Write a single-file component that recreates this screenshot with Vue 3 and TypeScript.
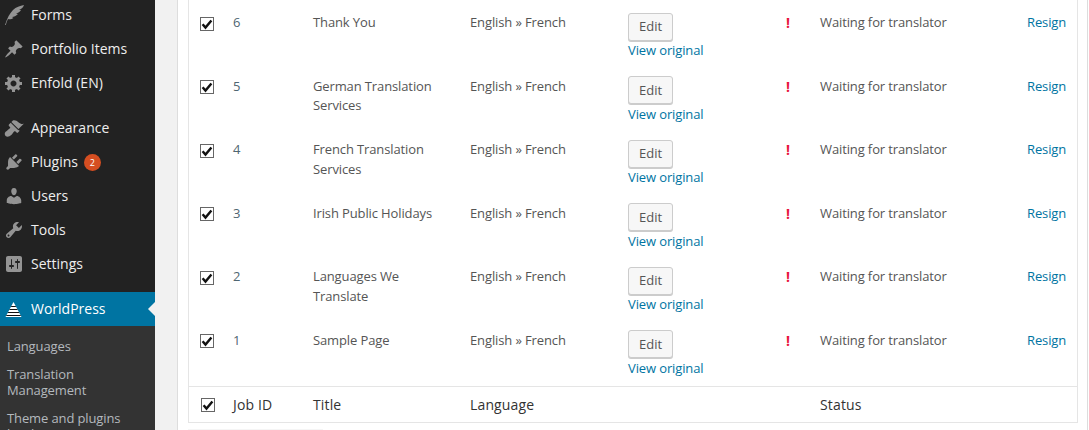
<script setup lang="ts">
interface MenuItem { label: string; icon: string; badge?: string; gapBefore?: boolean }
const icons: Record<string, string> = {
  forms: 'M1 20C3 13 6 8 9 5 12 2 16 1 20 0 19 3 17 4 15 5L17 5C16 7 14 8 12 8.5L14 9C12 11 10 12 8 12L9.5 13C7.5 14.5 5.5 14.5 4 14 3 16 2.2 18 1.8 20Z',
  pin: 'M10.44 3.02l1.82-1.82 6.36 6.35-1.83 1.82c-1.05-.68-2.48-.57-3.41.36l-.75.75c-.92.93-1.04 2.35-.35 3.41l-1.83 1.82-2.41-2.41-2.8 2.79c-.42.42-3.38 2.71-3.8 2.29s1.86-3.39 2.28-3.81l2.79-2.79L4.1 9.36l1.83-1.82c1.05.69 2.48.57 3.4-.36l.75-.75c.93-.92 1.05-2.35.36-3.41z',
  gear: 'M18 12h-2.18c-.17.7-.44 1.35-.81 1.93l1.54 1.54-2.1 2.1-1.54-1.54c-.58.36-1.23.63-1.91.79V19H8v-2.18c-.68-.16-1.33-.43-1.91-.79l-1.54 1.54-2.12-2.12 1.54-1.54c-.36-.58-.63-1.23-.79-1.91H1V9.03h2.17c.16-.7.44-1.35.8-1.94L2.43 5.55l2.1-2.1 1.54 1.54c.58-.37 1.24-.64 1.93-.81V2h3v2.18c.68.16 1.33.43 1.91.79l1.54-1.54 2.12 2.12-1.54 1.54c.36.59.64 1.24.8 1.94H18V12zm-8.5 1.5c1.66 0 3-1.34 3-3s-1.34-3-3-3-3 1.34-3 3 1.34 3 3 3z',
  brush: 'M14.48 11.06L7.41 3.99l1.5-1.5c.5-.56 2.3-.47 3.51.32 1.21.8 1.43 1.28 2.91 2.1 1.18.64 2.45 1.26 4.45.85zm-.71.71L6.7 4.7 4.93 6.47c-.39.39-.39 1.02 0 1.41l1.06 1.06c.39.39.39 1.03 0 1.42-.6.6-1.43 1.11-2.21 1.69-.35.26-.7.53-1.01.84C1.43 13.23.76 14.8.76 15.9c0 .76.3 1.47.83 2 .53.54 1.25.83 2 .83 1.08 0 2.67-.67 3.98-1.96.3-.32.57-.66.83-1.02.58-.78 1.09-1.61 1.7-2.21.38-.39 1.02-.39 1.41 0l1.06 1.06c.39.39 1.02.39 1.41 0l1.77-1.77z',
  plug: 'M13.11 4.36L9.87 7.6 8 5.73l3.24-3.24c.35-.34 1.05-.2 1.56.32.52.51.66 1.21.31 1.55zm-8 1.77l.91-1.12 9.01 9.01-1.19.84c-.71.71-2.63 1.16-3.82 1.16H6.14L4.9 17.26c-.59.59-1.54.59-2.12 0-.59-.58-.59-1.53 0-2.12l1.24-1.24v-3.88c0-1.13.4-3.19 1.09-3.89zm7.26 3.97l3.24-3.24c.34-.35 1.04-.21 1.55.31.52.51.66 1.21.31 1.55l-3.24 3.25z',
  user: 'M10 9.25c-2.27 0-2.73-3.44-2.73-3.44C7 4.02 7.82 2 9.97 2c2.16 0 2.98 2.02 2.71 3.81 0 0-.41 3.44-2.68 3.44zm0 2.57L12.72 10c2.39 0 4.52 2.33 4.52 4.53v2.49s-3.65 1.13-7.24 1.13c-3.65 0-7.24-1.13-7.24-1.13v-2.49c0-2.25 1.94-4.48 4.47-4.48z',
  tools: 'M16.68 9.77c-1.34 1.34-3.3 1.67-4.95.99l-5.41 6.52c-.99.99-2.59.99-3.58 0s-.99-2.59 0-3.57l6.52-5.42c-.68-1.65-.35-3.61.99-4.95 1.28-1.28 3.12-1.62 4.72-1.06l-2.89 2.89 2.82 2.82 2.86-2.87c.53 1.58.18 3.39-1.08 4.65zM3.81 16.21c.4.39 1.04.39 1.43 0 .4-.4.4-1.04 0-1.43-.39-.4-1.03-.4-1.43 0-.39.39-.39 1.03 0 1.43z',
  settings: 'M18 16V4c0-1.1-.9-2-2-2H4c-1.1 0-2 .9-2 2v12c0 1.1.9 2 2 2h12c1.1 0 2-.9 2-2zM8 11h1c.55 0 1 .45 1 1s-.45 1-1 1H8v1.5c0 .28-.22.5-.5.5s-.5-.22-.5-.5V13H6c-.55 0-1-.45-1-1s.45-1 1-1h1V5.5c0-.28.22-.5.5-.5s.5.22.5.5V11zm5-2h-1c-.55 0-1-.45-1-1s.45-1 1-1h1V5.5c0-.28.22-.5.5-.5s.5.22.5.5V7h1c.55 0 1 .45 1 1s-.45 1-1 1h-1v5.5c0 .28-.22.5-.5.5s-.5-.22-.5-.5V9z',
}
const menu: MenuItem[] = [
  { label: 'Forms', icon: 'forms' },
  { label: 'Portfolio Items', icon: 'pin' },
  { label: 'Enfold (EN)', icon: 'gear' },
  { label: 'Appearance', icon: 'brush', gapBefore: true },
  { label: 'Plugins', icon: 'plug', badge: '2' },
  { label: 'Users', icon: 'user' },
  { label: 'Tools', icon: 'tools' },
  { label: 'Settings', icon: 'settings' },
]
const submenu = ['Languages', 'Translation Management', 'Theme and plugins localization']
const jobs = [
  { id: 6, title: 'Thank You' },
  { id: 5, title: 'German Translation Services' },
  { id: 4, title: 'French Translation Services' },
  { id: 3, title: 'Irish Public Holidays' },
  { id: 2, title: 'Languages We Translate' },
  { id: 1, title: 'Sample Page' },
]
</script>

<template>
  <div class="app">
    <nav class="sidebar">
      <ul class="menu">
        <li v-for="item in menu" :key="item.label" class="item" :class="{ gap: item.gapBefore }">
          <span class="icon"><svg width="20" height="20" viewBox="0 0 20 20"><path :d="icons[item.icon]" fill="#949494" fill-rule="evenodd" /></svg></span>
          <span>{{ item.label }}</span>
          <span v-if="item.badge" class="badge">{{ item.badge }}</span>
        </li>
        <li class="item current">
          <span class="icon">
            <svg width="20" height="20" viewBox="0 0 20 20">
              <clipPath id="wp-tri"><polygon points="9.5,3 17.5,18 1.5,18" /></clipPath>
              <g clip-path="url(#wp-tri)">
                <rect x="0" y="0" width="20" height="20" fill="#fff" />
                <rect x="0" y="7" width="20" height="1" fill="#111" />
                <rect x="0" y="10" width="20" height="1" fill="#111" />
                <rect x="0" y="13" width="20" height="1" fill="#111" />
                <rect x="0" y="16" width="20" height="1" fill="#111" />
              </g>
            </svg>
          </span>
          <span>WorldPress</span>
          <span class="arrow"></span>
        </li>
      </ul>
      <ul class="sub">
        <li v-for="s in submenu" :key="s">{{ s }}</li>
      </ul>
    </nav>
    <main class="content">
      <div class="panel">
        <div class="jobs">
          <div v-for="job in jobs" :key="job.id" class="row">
            <span class="check"><svg width="12" height="12" viewBox="0 0 12 12"><path d="M1.6 6.2 4.5 9.6 10.4 2.6" fill="none" stroke="#111" stroke-width="2.4" /></svg></span>
            <span class="job-id">{{ job.id }}</span>
            <span class="title">{{ job.title }}</span>
            <span>English » French</span>
            <div class="actions">
              <button class="edit" type="button">Edit</button>
              <a class="link original">View original</a>
            </div>
            <span class="alert">!</span>
            <span>Waiting for translator</span>
            <a class="link">Resign</a>
          </div>
          <div class="row foot">
            <span class="check"><svg width="12" height="12" viewBox="0 0 12 12"><path d="M1.6 6.2 4.5 9.6 10.4 2.6" fill="none" stroke="#111" stroke-width="2.4" /></svg></span>
            <span>Job ID</span>
            <span>Title</span>
            <span>Language</span>
            <span></span>
            <span></span>
            <span>Status</span>
            <span></span>
          </div>
        </div>
        <div class="next-edge"></div>
      </div>
    </main>
  </div>
</template>

<style>
html, body { margin: 0; height: 430px; overflow: hidden; background: #fff; }
</style>

<style scoped>
.app {
  display: flex;
  height: 430px;
  overflow: hidden;
  font-family: "Open Sans", sans-serif;
  font-size: 13px;
  line-height: 19.5px;
  color: #555;
}
.sidebar { width: 155px; flex: none; background: #222; overflow: hidden; }
.menu, .sub { list-style: none; margin: 0; padding: 0; }
.menu { margin-top: -2px; }
.item {
  position: relative;
  display: flex;
  align-items: center;
  height: 34px;
  font-size: 14px;
  color: #eee;
}
.item.gap, .item.current { margin-top: 11px; }
.icon { width: 31px; padding-left: 4px; box-sizing: border-box; display: flex; }
.badge {
  width: 17px;
  height: 17px;
  margin-left: 6px;
  border-radius: 50%;
  background: #d54e21;
  color: #fff;
  font-size: 9px;
  line-height: 17px;
  text-align: center;
}
.current { background: #0074a2; color: #fff; }
.arrow {
  position: absolute;
  right: 0;
  top: 10px;
  border: 7px solid transparent;
  border-left-width: 0;
  border-right-color: #f1f1f1;
}
.sub { background: #333; padding: 11px 7px 0; color: #b4b9be; height: 200px; letter-spacing: -0.12px; }
.sub li { margin-bottom: 12px; line-height: 16px; }
.sub li:first-child { margin-bottom: 11px; line-height: 18px; }

.content { width: 933px; flex: none; box-sizing: border-box; padding-left: 22px; background: #f1f1f1; }
.panel {
  height: 430px;
  box-sizing: border-box;
  background: #fff;
  border-left: 1px solid #ddd;
  border-right: 1px solid #ddd;
  padding: 0 9px 0 10px;
}
.jobs {
  box-sizing: border-box;
  height: 423px;
  padding-top: 5px;
  border: 1px solid #e5e5e5;
  border-top: 0;
}
.row {
  display: grid;
  grid-template-columns: 44px 80px 157px 158px 157px 35px 207px 1fr;
  height: 63.5px;
  box-sizing: border-box;
  padding-top: 8px;
  letter-spacing: -0.12px;
}
.title { padding-right: 20px; }
.job-id { color: #4f6672; }
.check {
  width: 12px;
  height: 12px;
  margin: 3.98px 0 0 11px;
  border: 1px solid #666;
  background: #fff;
  display: flex;
}
.link { color: #0074a2; }
.actions { display: flex; flex-direction: column; align-items: flex-start; }
.edit {
  width: 45px;
  height: 28px;
  margin: -0.02px 0 0.02px;
  padding: 0;
  border: 1px solid #ccc;
  border-radius: 3px;
  background: #f7f7f7;
  box-shadow: 0 1px 0 #ccc;
  color: #555;
  font: inherit;
}
.alert { color: #e8143c; font-weight: 700; font-size: 14px; padding-left: 1px; }
.foot {
  height: 36px;
  border-top: 1px solid #e5e5e5;
  padding-top: 8px;
  font-size: 14px;
  color: #333;
  letter-spacing: 0.15px;
}
.foot .check { margin: 3px 0 0 12px; }
.next-edge { width: 135px; height: 1px; margin-top: 6px; background: #f5f5f5; }
</style>
